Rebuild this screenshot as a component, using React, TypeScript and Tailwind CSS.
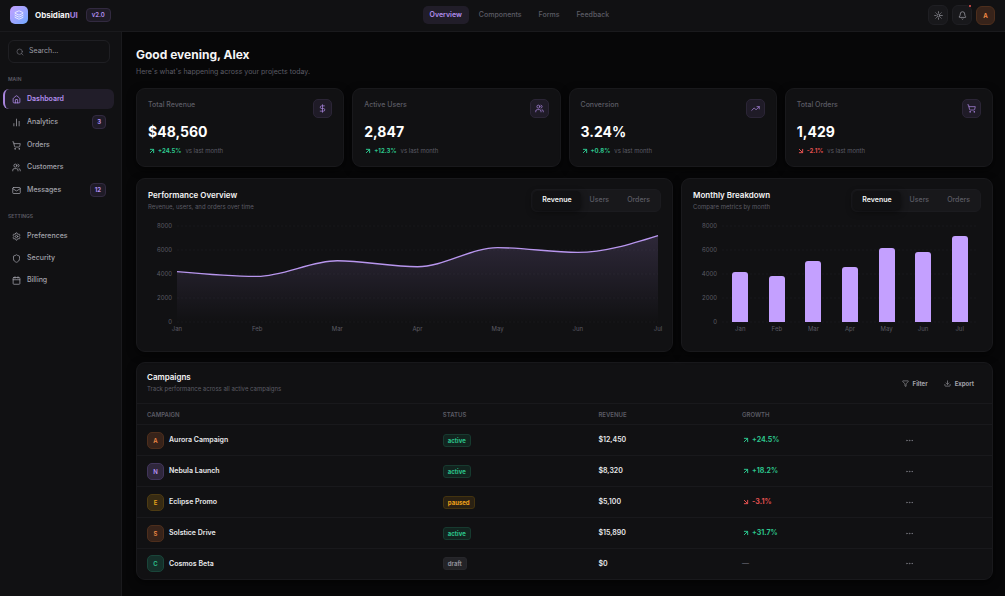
import React, { useState } from 'react';
import {
  ArrowDownRight,
  ArrowUpRight,
  Bell,
  Calendar,
  ChartNoAxesColumn,
  DollarSign,
  Download,
  Ellipsis,
  Funnel,
  House,
  Layers,
  Mail,
  Search,
  Settings,
  Shield,
  ShoppingCart,
  Sun,
  TrendingUp,
  Users,
  type LucideIcon,
} from 'lucide-react';

interface NavItem {
  label: string;
  icon: LucideIcon;
  badge?: string;
}

const mainNav: NavItem[] = [
  { label: 'Dashboard', icon: House },
  { label: 'Analytics', icon: ChartNoAxesColumn, badge: '3' },
  { label: 'Orders', icon: ShoppingCart },
  { label: 'Customers', icon: Users },
  { label: 'Messages', icon: Mail, badge: '12' },
];

const settingsNav: NavItem[] = [
  { label: 'Preferences', icon: Settings },
  { label: 'Security', icon: Shield },
  { label: 'Billing', icon: Calendar },
];

const stats = [
  { label: 'Total Revenue', value: '$48,560', change: '+24.5%', icon: DollarSign },
  { label: 'Active Users', value: '2,847', change: '+12.3%', icon: Users },
  { label: 'Conversion', value: '3.24%', change: '+0.8%', icon: TrendingUp },
  { label: 'Total Orders', value: '1,429', change: '-2.1%', icon: ShoppingCart },
];

const months = ['Jan', 'Feb', 'Mar', 'Apr', 'May', 'Jun', 'Jul'];
const MAX = 8000;
const ticks = ['8000', '6000', '4000', '2000', '0'];

const series: Record<string, number[]> = {
  Revenue: [4200, 3800, 5100, 4600, 6200, 5800, 7200],
  Users: [2400, 2210, 2900, 2780, 3890, 3490, 4300],
  Orders: [1200, 1100, 1600, 1400, 2100, 1900, 2500],
};

const campaigns = [
  { name: 'Aurora Campaign', status: 'active', revenue: '$12,450', growth: '+24.5%', tone: 'bg-[#37231a] border-[#4d2e1c] text-[#f08a45]' },
  { name: 'Nebula Launch', status: 'active', revenue: '$8,320', growth: '+18.2%', tone: 'bg-[#2f273c] border-[#41355a] text-[#b794f6]' },
  { name: 'Eclipse Promo', status: 'paused', revenue: '$5,100', growth: '-3.1%', tone: 'bg-[#372b13] border-[#4d3b13] text-[#eaa51c]' },
  { name: 'Solstice Drive', status: 'active', revenue: '$15,890', growth: '+31.7%', tone: 'bg-[#37231a] border-[#4d2e1c] text-[#f08a45]' },
  { name: 'Cosmos Beta', status: 'draft', revenue: '$0', growth: '', tone: 'bg-[#15302a] border-[#1a453a] text-[#2fc992]' },
];

const statusTone: Record<string, string> = {
  active: 'bg-[#12241f] border-[#173a2f] text-[#2cc48c]',
  paused: 'bg-[#2a2113] border-[#43330f] text-[#eea11a]',
  draft: 'bg-[#232327] border-[#27272b] text-[#8d8d96]',
};

const card = 'rounded-[9px] border border-[#19191c] bg-[#111113] shadow-[0_3px_8px_rgba(0,0,0,0.6)]';

const SideLink: React.FC<{ item: NavItem; active: boolean; onSelect: () => void }> = ({ item, active, onSelect }) => {
  const Icon = item.icon;
  return (
    <a
      href="#"
      onClick={onSelect}
      className={`flex items-center gap-1.5 rounded-md border-l-2 pr-2 pl-[7px] text-[7px] font-medium ${
        item.badge ? 'h-[22px]' : 'h-5'
      } ${active ? 'border-[#a884dc] bg-[#211d29] font-semibold text-[#b48ff0]' : 'border-transparent text-[#a3a3ab]'}`}
    >
      <Icon size={9} strokeWidth={2} className="shrink-0" />
      <span className="flex-1">{item.label}</span>
      {item.badge && (
        <span className="rounded border border-[#322a40] bg-[#1f1b27] px-1 text-[6px] leading-3 font-bold text-[#b48ff0]">
          {item.badge}
        </span>
      )}
    </a>
  );
};

const Change: React.FC<{ value: string }> = ({ value }) => {
  const down = value.startsWith('-');
  const Icon = down ? ArrowDownRight : ArrowUpRight;
  return (
    <span className={`flex items-center gap-0.5 font-bold ${down ? 'text-[#e0504f]' : 'text-[#2cc48c]'}`}>
      <Icon size={8} strokeWidth={3} />
      {value}
    </span>
  );
};

const ChartCard: React.FC<{
  title: string;
  subtitle: string;
  children: (values: number[]) => React.ReactNode;
}> = ({ title, subtitle, children }) => {
  const [tab, setTab] = useState('Revenue');
  return (
    <section className={`${card} min-w-0 px-[11px] pt-2.5 pb-[17px]`}>
      <div className="flex items-start justify-between">
        <div>
          <h2 className="text-[8px] leading-3 font-semibold text-[#f4f4f5]">{title}</h2>
          <p className="text-[6px] leading-3 text-[#5c5c65]">{subtitle}</p>
        </div>
        <div className="flex rounded-md border border-[#1b1b1f] bg-[#18181b] p-px">
          {Object.keys(series).map(name => (
            <button
              key={name}
              onClick={() => setTab(name)}
              className={`h-[19px] rounded-[5px] px-[9px] text-[7px] ${
                tab === name
                  ? 'bg-[#111113] font-semibold text-[#f4f4f5] shadow-[0_2px_6px_rgba(0,0,0,0.5)]'
                  : 'font-medium text-[#5c5c65]'
              }`}
            >
              {name}
            </button>
          ))}
        </div>
      </div>
      <div className="mt-[13px] flex">
        <div className="-my-1 flex h-[104px] w-6 flex-col justify-between text-right text-[6px] leading-2 text-[#5c5c65]">
          {ticks.map(t => (
            <span key={t}>{t}</span>
          ))}
        </div>
        <div className="min-w-0 flex-1">{children(series[tab])}</div>
      </div>
    </section>
  );
};

const GridLines = () => (
  <g stroke="#19191c" strokeDasharray="2 2">
    {[0, 24, 48, 72, 96].map(y => (
      <line key={y} x1="0" x2="480" y1={y} y2={y} vectorEffect="non-scaling-stroke" />
    ))}
  </g>
);

// smooth curve through the points, flat at every local peak and dip
const buildLine = (values: number[]) => {
  const step = 480 / (values.length - 1);
  const y = values.map(v => 96 - (v / MAX) * 96);
  const last = values.length - 1;
  return y.reduce((d, cur, i) => {
    if (i === 0) return `M0,${cur}`;
    const prev = y[i - 1];
    const c1 = i === 1 ? prev + (cur - prev) / 2 : prev;
    const c2 = i === last ? cur - (cur - prev) / 2 : cur;
    return `${d} C${(i - 1) * step + step / 3},${c1} ${i * step - step / 3},${c2} ${i * step},${cur}`;
  }, '');
};

const AreaChart: React.FC<{ values: number[] }> = ({ values }) => {
  const line = buildLine(values);
  return (
    <div className="pr-[3px] pl-[5px]">
      <svg viewBox="0 0 480 96" preserveAspectRatio="none" className="block h-24 w-full overflow-visible">
        <defs>
          <linearGradient id="area" x1="0" y1="0" x2="0" y2="1">
            <stop offset="0" stopColor="#c4a0ff" stopOpacity="0.16" />
            <stop offset="1" stopColor="#c4a0ff" stopOpacity="0" />
          </linearGradient>
        </defs>
        <GridLines />
        <path d={`${line} L480,96 L0,96 Z`} fill="url(#area)" />
        <path d={line} fill="none" stroke="#b896ee" strokeWidth="1.4" vectorEffect="non-scaling-stroke" />
      </svg>
      <div className="flex justify-between pt-0.5 text-[6px] leading-[10px] text-[#5c5c65]">
        {months.map(m => (
          <span key={m} className="flex w-0 justify-center">
            {m}
          </span>
        ))}
      </div>
    </div>
  );
};

const BarChart: React.FC<{ values: number[] }> = ({ values }) => (
  <div className="pr-[3px] pl-[5px]">
    <div className="grid">
      <svg viewBox="0 0 480 96" preserveAspectRatio="none" className="col-start-1 row-start-1 h-24 w-full overflow-visible">
        <GridLines />
      </svg>
      <div className="col-start-1 row-start-1 flex h-24 items-end justify-around">
        {values.map((v, i) => (
          <div key={months[i]} className="w-4 rounded-t-[3px] bg-[#c4a0ff]" style={{ height: `${(v / MAX) * 100}%` }} />
        ))}
      </div>
    </div>
    <div className="flex justify-around pt-0.5 text-[6px] leading-[10px] text-[#5c5c65]">
      {months.map(m => (
        <span key={m} className="w-4 text-center">
          {m}
        </span>
      ))}
    </div>
  </div>
);

const Header = () => {
  const [page, setPage] = useState('Overview');
  return (
    <header className="flex h-8 items-center justify-between border-b border-[#1a1a1d] bg-[#111113] px-2.5 pb-px">
      <div className="flex items-center">
        <span className="flex size-[18px] items-center justify-center rounded-[5px] bg-linear-to-br from-[#c4a0ff] to-[#6ea8ff] text-white">
          <Layers size={10} strokeWidth={1.8} />
        </span>
        <span className="ml-[7px] text-[8px] font-bold text-[#f4f4f5]">
          Obsidian<span className="text-[#a57fe0]">UI</span>
        </span>
        <span className="ml-2 rounded border border-[#322a40] bg-[#1f1b27] px-[5px] text-[6px] leading-3 font-semibold text-[#b48ff0]">
          v2.0
        </span>
      </div>
      <nav className="flex gap-[3px]">
        {['Overview', 'Components', 'Forms', 'Feedback'].map(p => (
          <a
            key={p}
            href="#"
            onClick={() => setPage(p)}
            className={`rounded-[5px] px-[7px] text-[7px] leading-[18px] ${
              p === page ? 'bg-[#211d29] font-semibold text-[#b48ff0]' : 'font-medium text-[#5c5c65]'
            }`}
          >
            {p}
          </a>
        ))}
      </nav>
      <div className="flex items-center gap-1">
        <button aria-label="Toggle theme" className="flex size-5 items-center justify-center rounded-md border border-[#1f1f23] bg-[#18181b] text-[#9c9ca4]">
          <Sun size={9} />
        </button>
        <button aria-label="Notifications" className="relative flex size-5 items-center justify-center rounded-md border border-[#1f1f23] bg-[#18181b] text-[#9c9ca4]">
          <Bell size={9} />
          <span className="absolute -top-px right-0 size-0.5 rounded-full bg-[#ef5350]" />
        </button>
        <button aria-label="Account" className="size-[19px] rounded-md border border-[#4d2e1c] bg-[#37231a] text-[6px] font-bold text-[#f08a45]">
          A
        </button>
      </div>
    </header>
  );
};

const Sidebar = () => {
  const [current, setCurrent] = useState('Dashboard');
  const group = (items: NavItem[]) => (
    <nav className="flex flex-col gap-0.5">
      {items.map(item => (
        <SideLink key={item.label} item={item} active={item.label === current} onSelect={() => setCurrent(item.label)} />
      ))}
    </nav>
  );
  return (
    <aside className="w-[122px] shrink-0 border-r border-[#1a1a1d] bg-[#111113] pt-2 pr-[7px] pl-[3px]">
      <label className="mr-1 ml-[5px] flex h-[23px] items-center gap-[5px] rounded-md border border-[#1f1f23] px-[7px] text-[#6f6f78]">
        <Search size={8} className="shrink-0" />
        <input
          type="text"
          aria-label="Search"
          placeholder="Search..."
          className="w-full min-w-0 bg-transparent text-[7px] text-[#f4f4f5] outline-none placeholder:text-[#9c9ca4]"
        />
      </label>
      <h3 className="mt-[11px] mb-1 pl-[5px] text-[5px] leading-[11px] font-semibold text-[#5c5c65]">MAIN</h3>
      {group(mainNav)}
      <h3 className="mt-2.5 mb-1 pl-[5px] text-[5px] leading-[11px] font-semibold text-[#5c5c65]">SETTINGS</h3>
      {group(settingsNav)}
    </aside>
  );
};

const Campaigns = () => (
  <section className={`${card} mt-2.5 overflow-hidden`}>
    <div className="flex items-center justify-between px-2.5 pt-2 pb-2">
      <div>
        <h2 className="text-[8px] leading-3 font-semibold text-[#f4f4f5]">Campaigns</h2>
        <p className="text-[6px] leading-3 text-[#5c5c65]">Track performance across all active campaigns</p>
      </div>
      <div className="flex text-[6px] font-bold text-[#a3a3ab]">
        <button className="flex items-center gap-1 px-2">
          <Funnel size={7} />
          Filter
        </button>
        <button className="flex items-center gap-1 px-2">
          <Download size={7} />
          Export
        </button>
      </div>
    </div>
    <table className="w-full table-fixed text-left">
      <colgroup>
        <col className="w-[34.6%]" />
        <col className="w-[18.2%]" />
        <col className="w-[16.8%]" />
        <col className="w-[18.6%]" />
        <col />
      </colgroup>
      <thead>
        <tr className="h-[21px] border-y border-[#19191c] text-[6px] text-[#5c5c65]">
          {['CAMPAIGN', 'STATUS', 'REVENUE', 'GROWTH'].map(h => (
            <th key={h} className="px-2.5 font-semibold">
              {h}
            </th>
          ))}
          <th aria-label="Actions" />
        </tr>
      </thead>
      <tbody className="text-[7px] font-semibold text-[#e8e8ea]">
        {campaigns.map(c => (
          <tr key={c.name} className="h-[31px] border-b border-[#19191c] last:h-[30px] last:border-b-0">
            <td className="px-2.5">
              <div className="flex items-center gap-[5px]">
                <span className={`flex size-[17px] items-center justify-center rounded-[5px] border text-[6px] ${c.tone}`}>
                  {c.name[0]}
                </span>
                {c.name}
              </div>
            </td>
            <td className="px-2.5">
              <span className={`block w-fit rounded-[3px] border px-1 text-[6px] leading-[11px] font-bold ${statusTone[c.status]}`}>
                {c.status}
              </span>
            </td>
            <td className="px-2.5">{c.revenue}</td>
            <td className="px-2.5">
              {c.growth ? <Change value={c.growth} /> : <span className="text-[#5c5c65]">—</span>}
            </td>
            <td className="px-2.5">
              <button aria-label={`Actions for ${c.name}`} className="flex px-1 text-[#77777f]">
                <Ellipsis size={9} />
              </button>
            </td>
          </tr>
        ))}
      </tbody>
    </table>
  </section>
);

const App: React.FC = () => (
  <div className="flex min-h-screen flex-col bg-[#070708] font-['Inter','Liberation_Sans',sans-serif]">
    <Header />
    <div className="flex flex-1">
      <Sidebar />
      <main className="min-w-0 flex-1 pt-[14px] pr-3 pb-4 pl-[14px]">
        <h1 className="text-[12px] leading-[18px] font-bold text-[#f4f4f5]">Good evening, Alex</h1>
        <p className="mt-0.5 text-[7px] leading-3 text-[#5c5c65]">Here's what's happening across your projects today.</p>

        <div className="mt-2.5 grid grid-cols-4 gap-2">
          {stats.map(s => (
            <section key={s.label} className={`${card} px-[11px] pt-2.5 pb-[9px]`}>
              <div className="flex items-start justify-between">
                <h2 className="text-[7px] leading-3 font-medium text-[#5c5c65]">{s.label}</h2>
                <span className="flex size-[19px] items-center justify-center rounded-[5px] border border-[#2b2536] bg-[#1f1b27] text-[#a884dc]">
                  <s.icon size={9} />
                </span>
              </div>
              <p className="mt-1 text-[14px] leading-5 font-bold text-white">{s.value}</p>
              <p className="mt-[3px] flex items-center gap-1 text-[6px] leading-3 text-[#5c5c65]">
                <Change value={s.change} />
                vs last month
              </p>
            </section>
          ))}
        </div>

        <div className="mt-[11px] grid grid-cols-[537fr_312fr] gap-2">
          <ChartCard title="Performance Overview" subtitle="Revenue, users, and orders over time">
            {values => <AreaChart values={values} />}
          </ChartCard>
          <ChartCard title="Monthly Breakdown" subtitle="Compare metrics by month">
            {values => <BarChart values={values} />}
          </ChartCard>
        </div>

        <Campaigns />
      </main>
    </div>
  </div>
);

export default App;
